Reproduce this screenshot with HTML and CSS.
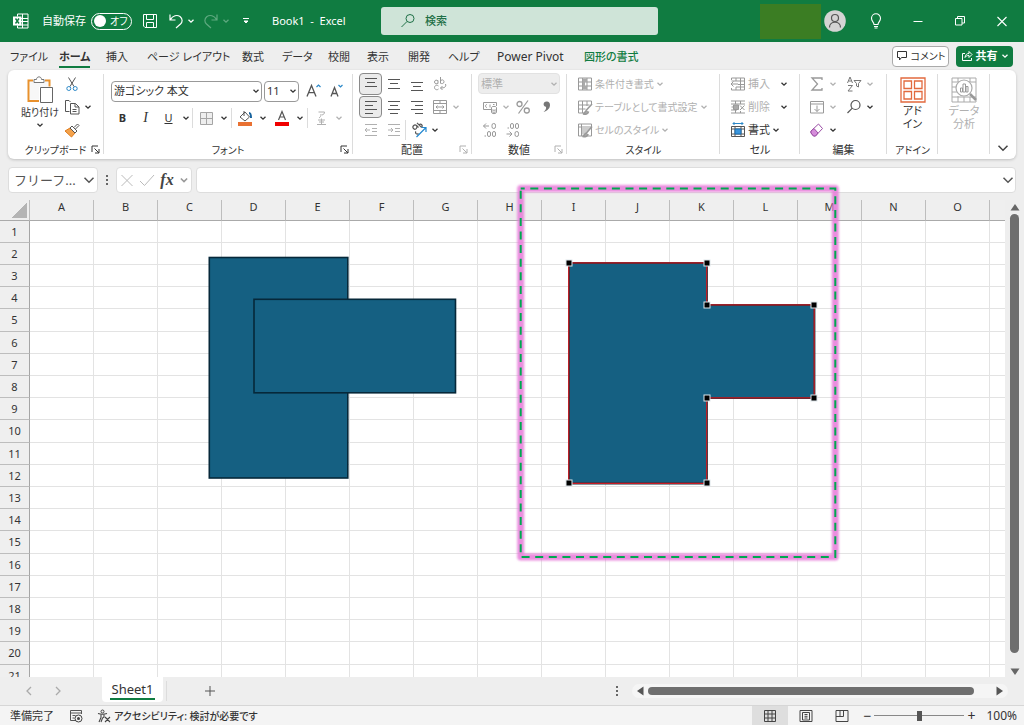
FILE: index.html
```html
<!DOCTYPE html>
<html lang="ja">
<head>
<meta charset="utf-8">
<meta name="viewport" content="width=device-width, initial-scale=1">
<title>Book1 - Excel</title>
<link rel="stylesheet" href="styles.css">
</head>
<body>
<svg class="symbols" aria-hidden="true">
  <symbol id="chev" viewBox="0 0 8 8"><path d="M1.5 2.8 4 5.2 6.5 2.8" fill="none" stroke="currentColor" stroke-width="1.3"/></symbol>
  <symbol id="launch" viewBox="0 0 9 9"><path d="M1 7V1h6M3.5 3.5 8 8M8 4v4H4" fill="none" stroke="currentColor" stroke-width="1"/></symbol>
</svg>

<header class="titlebar">
  <div class="title-left">
    <svg class="i16" viewBox="0 0 16 16"><path d="M4.500 3.500v-2.500h10.500v14h-10.500v-2.500M4.500 5.500h10.500M9.500 1v14M8 8.500h7M4.500 12h10.500" fill="none" stroke="#fff"/><path d="M0 3.500h8.500v9H0z" fill="#fff"/><path d="m2.500 5.500 3.500 5M6 5.500l-3.500 5" stroke="#107c41" stroke-width="1.400"/></svg>
    <label class="autosave" for="autosave">自動保存</label>
    <span class="switch"><input type="checkbox" id="autosave"><span>オフ</span></span>
    <button class="tb save" aria-label="上書き保存"><svg class="i16" viewBox="0 0 16 16"><path d="M1.500 1.500h13v13H3l-1.500-1.500zM4.500 1.500v5h7v-5M4.500 14.500v-5h7v5" fill="none" stroke="#fff"/></svg></button>
    <button class="tb undo" aria-label="元に戻す"><svg class="i16" viewBox="0 0 16 16"><path d="M2 1.500v5.500h5.500M2.200 6.800C5 2.500 9 1.500 12 3.500c3 2.500 2.500 5.500.5 7.500L8 15" fill="none" stroke="#fff" stroke-width="1.200"/></svg><svg class="chev"><use href="#chev"/></svg></button>
    <button class="tb redo" aria-label="やり直し"><svg class="i16" viewBox="0 0 16 16"><path d="M14 1.500v5.500H8.500M13.800 6.800C11 2.500 7 1.500 4 3.500c-3 2.500-2.500 5.500-.5 7.500L8 15" fill="none" stroke="currentColor" stroke-width="1.200"/></svg><svg class="chev"><use href="#chev"/></svg></button>
    <button class="tb more" aria-label="クイック アクセス"><svg class="chev" viewBox="0 0 8 8"><path d="M1 1.500h6M2 4l2 2 2-2z" fill="#fff" stroke="#fff"/></svg></button>
    <span class="doc">Book1&nbsp; -&nbsp; Excel</span>
  </div>
  <label class="search"><svg class="i16" viewBox="0 0 16 16"><circle cx="10" cy="5.500" r="4" fill="none" stroke="#1f7047"/><path d="M7 8.500 1.500 14" stroke="#1f7047"/></svg><input type="text" placeholder="検索" aria-label="検索"></label>
  <div class="title-right">
    <span class="mask"></span>
    <button class="avatar" aria-label="アカウント"><svg viewBox="0 0 22 22"><circle cx="11" cy="11" r="10.800" fill="#d4d4d4"/><circle cx="11" cy="8" r="3.500" fill="none" stroke="#555" stroke-width="1.200"/><path d="M5.500 17.500c0-7 11-7 11 0" fill="none" stroke="#555" stroke-width="1.200"/></svg></button>
    <button class="win" aria-label="ヒント"><svg class="i16" viewBox="0 0 16 16"><path d="M6 11.500C6 9 3.500 8.500 3.500 5.300a4.500 4.500 0 0 1 9 0C12.500 8.500 10 9 10 11.500zM6 13.500h4M6.500 15h3" fill="none" stroke="#fff" stroke-width="1.100"/></svg></button>
    <button class="win" aria-label="最小化"><svg class="i16" viewBox="0 0 16 16"><path d="M3.500 8.500h9" stroke="#fff"/></svg></button>
    <button class="win" aria-label="元に戻す"><svg class="i16" viewBox="0 0 16 16"><path d="M3.500 5.500h6.500v6.500H3.500zM5.500 5.500v-2h7v6.500h-2.500" fill="none" stroke="#fff"/></svg></button>
    <button class="win" aria-label="閉じる"><svg class="i16" viewBox="0 0 16 16"><path d="m3.500 4 9 9M12.500 4l-9 9" stroke="#fff" stroke-width="1.100"/></svg></button>
  </div>
</header>

<div class="tabrow">
  <nav class="tabs">
    <a href="#">ファイル</a><a href="#" class="active">ホーム</a><a href="#">挿入</a><a href="#">ページ レイアウト</a><a href="#">数式</a><a href="#">データ</a><a href="#">校閲</a><a href="#">表示</a><a href="#">開発</a><a href="#">ヘルプ</a><a href="#" class="latin">Power Pivot</a><a href="#" class="context">図形の書式</a>
  </nav>
  <button class="comment kana"><svg viewBox="0 0 12 12"><path d="M1.500 1.500h9v6H5.500L3.500 10V7.500h-2z" fill="none" stroke="#333"/></svg>コメント</button>
  <button class="share"><svg viewBox="0 0 12 12"><path d="M4 3.500H1.500v7h9V8M4 7.500c.3-3 2-4 4-4V1.500l3 3-3 3v-2c-2 0-3 .5-4 2z" fill="none" stroke="#fff"/></svg>共有<svg class="chev"><use href="#chev"/></svg></button>
</div>

<section class="ribbon">
  <div class="group">
    <div class="clip">
      <button class="big kana"><svg class="i28" viewBox="0 0 28 28"><path d="M7 4.500H2.500v20.500H13M19 4.500h4.500v6" fill="none" stroke="#e8912d" stroke-width="2"/><path d="M4 6v17.500h9V11h9V6z" fill="#f7f7f7"/><path d="M8 6.500V3.500h2.500c0-3.500 5-3.500 5 0H18v3z" fill="#fff" stroke="#777"/><path d="M14.500 11.500h12v15h-12z" fill="#fff" stroke="#666"/></svg>貼り付け<svg class="chev"><use href="#chev"/></svg></button>
      <div class="stack">
        <button class="cb" aria-label="切り取り"><svg class="i16" viewBox="0 0 16 16"><path d="m4.500 1.500 5.500 9M11.500 1.500 6 10.500" stroke="#555"/><circle cx="4.800" cy="12.500" r="2" fill="none" stroke="#2b88c8"/><circle cx="11.200" cy="12.500" r="2" fill="none" stroke="#2b88c8"/></svg></button>
        <button class="cb" aria-label="コピー"><svg class="i16" viewBox="0 0 16 16"><path d="M5.500 12.500h-4v-11H5l1.500 1.500M6.500 4.500h5l3.500 3.500v7H6.500zM11 4.500V8h4M8.500 10.500h4M8.500 12.500h4" fill="none" stroke="#555"/></svg><svg class="chev"><use href="#chev"/></svg></button>
        <button class="cb" aria-label="書式のコピー"><svg class="i16" viewBox="0 0 16 16"><path d="m1 9 5-3 5 5-3.500 4z" fill="#f3a24c" stroke="#df7b1c"/><path d="m6 6 2-2 5 5-2 2zM10 5.500 13.500 2 15 3.500 11.500 7" fill="#fff" stroke="#555"/></svg></button>
      </div>
    </div>
    <div class="foot"><span class="kana">クリップボード</span><button aria-label="詳細"><svg><use href="#launch"/></svg></button></div>
  </div>

  <div class="group">
    <div class="font">
      <div class="row fontpick">
        <span class="combo face"><select aria-label="フォント"><option>游ゴシック 本文</option></select><svg class="chev"><use href="#chev"/></svg></span>
        <span class="combo size"><select aria-label="フォント サイズ"><option>11</option></select><svg class="chev"><use href="#chev"/></svg></span>
        <button class="ib" aria-label="拡大"><svg class="i16" viewBox="0 0 16 16"><path d="m1 13.500 4.500-11 4.500 11M2.600 9.700h5.800" fill="none" stroke="#555" stroke-width="1.300"/><path d="m10.500 4 2-2 2 2" fill="none" stroke="#2b88c8" stroke-width="1.200"/></svg></button>
        <button class="ib" aria-label="縮小"><svg class="i16" viewBox="0 0 16 16"><path d="m2 13.500 3.500-9 3.500 9M3.300 10.500h4.400" fill="none" stroke="#555" stroke-width="1.300"/><path d="m9.500 2 2 2 2-2" fill="none" stroke="#2b88c8" stroke-width="1.200"/></svg></button>
      </div>
      <div class="row fontstyle">
        <button class="ib bold">B</button><button class="ib ital">I</button><button class="ib under">U</button><button class="arr" aria-label="下線"><svg class="chev"><use href="#chev"/></svg></button>
        <i class="sep"></i>
        <button class="ib" aria-label="罫線"><svg class="i16" viewBox="0 0 16 16"><path d="M2.500 2.500h12v12h-12zM8.500 2.500v12M2.500 8.500h12" fill="#eee" stroke="#a5a5a5"/></svg></button><button class="arr" aria-label="罫線の種類"><svg class="chev"><use href="#chev"/></svg></button>
        <i class="sep"></i>
        <button class="ib" aria-label="塗りつぶし"><svg class="i16" viewBox="0 0 16 16"><path d="m3 7 5-5 4.500 5L8 11zM7 1v5" fill="none" stroke="#555"/><path d="M12 3c1 0 2 1.500 2 5" fill="none" stroke="#17639e" stroke-width="2"/><path d="M1 12h14v4H1z" fill="#e97132"/></svg></button><button class="arr" aria-label="塗りつぶしの色"><svg class="chev"><use href="#chev"/></svg></button>
        <button class="ib" aria-label="文字の色"><svg class="i16" viewBox="0 0 16 16"><path d="M4.500 10 8 1.500l3.500 8.500M5.700 7h4.600" fill="none" stroke="#555" stroke-width="1.200"/><path d="M1 12h14v4H1z" fill="#f00000"/></svg></button><button class="arr" aria-label="色の選択"><svg class="chev"><use href="#chev"/></svg></button>
        <i class="sep"></i>
        <button class="ib off" aria-label="ふりがな"><svg class="i16" viewBox="0 0 16 16"><path d="M5.500 2h6c0 2-1 2.500-2.500 3M8 4c0 2-.5 3-2 4M5 10h7M4 14.500h9M6 12h5M8.500 8.500v6" fill="none" stroke="currentColor"/></svg></button><button class="arr off" aria-label="ふりがなの設定"><svg class="chev"><use href="#chev"/></svg></button>
      </div>
    </div>
    <div class="foot"><span class="kana">フォント</span><button aria-label="詳細"><svg><use href="#launch"/></svg></button></div>
  </div>

  <div class="group">
    <div class="aligns">
      <div class="row">
        <button class="ib on" aria-label="上揃え"><svg class="i16" viewBox="0 0 16 16"><path d="M2 2.500h12M4 6.500h8M2 10.500h12" stroke="#555"/></svg></button>
        <button class="ib" aria-label="上下中央"><svg class="i16" viewBox="0 0 16 16"><path d="M2 3.500h12M4 7.500h8M2 12.500h12" stroke="#555"/></svg></button>
        <button class="ib" aria-label="下揃え"><svg class="i16" viewBox="0 0 16 16"><path d="M2 6.500h12M4 10.500h8M2 14.500h12" stroke="#555"/></svg></button>
        <button class="ib off" aria-label="折り返し"><svg class="i16" viewBox="0 0 16 16"><path d="M6 4.500v3M6 5c-1-1.500-3.500-1-3.500 1s2.500 2.500 3.500 1M8.500 1v6.500M8.500 5C10 3 12 4 12 5.800s-2.500 2.500-3.500 1M6.500 10C5 8.500 2.500 9.500 2.500 11.500s2.500 3 4 1.500M13.500 8c1 3-1 4-5 4M10.500 10l-2 2 2 2" fill="none" stroke="#999"/></svg></button>
      </div>
      <div class="row">
        <button class="ib on" aria-label="左揃え"><svg class="i16" viewBox="0 0 16 16"><path d="M2 2.500h12M2 6.500h8M2 10.500h12M2 14.500h8" stroke="#555"/></svg></button>
        <button class="ib" aria-label="中央揃え"><svg class="i16" viewBox="0 0 16 16"><path d="M2 2.500h12M4 6.500h8M2 10.500h12M4 14.500h8" stroke="#555"/></svg></button>
        <button class="ib" aria-label="右揃え"><svg class="i16" viewBox="0 0 16 16"><path d="M2 2.500h12M6 6.500h8M2 10.500h12M6 14.500h8" stroke="#555"/></svg></button>
        <button class="ib off" aria-label="結合"><svg class="i16" viewBox="0 0 16 16"><path d="M1.500 1.500h13v13h-13zM1.500 4.500h13M1.500 11.500h13M8 1.500v3M8 11.500v3M4 8h8M5.500 6.500 4 8l1.500 1.500M10.500 6.500 12 8l-1.500 1.500" fill="none" stroke="#999"/></svg></button><button class="arr off" aria-label="結合の種類"><svg class="chev"><use href="#chev"/></svg></button>
      </div>
      <div class="row">
        <button class="ib off" aria-label="インデント減"><svg class="i16" viewBox="0 0 16 16"><path d="M2 2.500h12M9 6.500h5M9 9.500h5M2 13.500h12M2 8h5M4 6 2 8l2 2" fill="none" stroke="currentColor"/></svg></button>
        <button class="ib off" aria-label="インデント増"><svg class="i16" viewBox="0 0 16 16"><path d="M2 2.500h12M9 6.500h5M9 9.500h5M2 13.500h12M2 8h5M5 6l2 2-2 2" fill="none" stroke="currentColor"/></svg></button>
        <i class="sep"></i>
        <button class="ib" aria-label="方向"><svg class="i16" viewBox="0 0 16 16"><path d="M5.500 3.500C3.500 2 .500 4.500 2.500 6.500s4.500-.5 3-3l2 2M6 .8l4.500 4.500M8 3c2-2 4.500.5 2.500 2.500M5 9.500c-1.500 1.500 1 3.500 2.500 2" fill="none" stroke="#555" stroke-width="1.200"/><path d="m5.500 15 9-9M10.500 5.500h4.500v4.500" fill="none" stroke="#2488d0" stroke-width="1.200"/></svg></button><button class="arr" aria-label="方向の種類"><svg class="chev"><use href="#chev"/></svg></button>
      </div>
    </div>
    <div class="foot"><span>配置</span><button class="off" aria-label="詳細"><svg><use href="#launch"/></svg></button></div>
  </div>

  <div class="group">
    <div class="number">
      <div class="row"><span class="combo numfmt off"><select aria-label="表示形式" disabled><option>標準</option></select><svg class="chev"><use href="#chev"/></svg></span></div>
      <div class="row off">
        <button class="ib" aria-label="通貨"><svg class="i16" viewBox="0 0 16 16"><path d="M9 10.500H1.500v-7h13V7M5 5.500c-2 0-2 3 0 3M8 5.500v3M11 5.500h1.500M9.500 8.500c0-1.500 5-1.500 5 0v5c0 1.500-5 1.500-5 0zM9.500 10.500c1 1 4 1 5 0M9.500 12.500c1 1 4 1 5 0" fill="none" stroke="#999"/></svg></button><button class="arr" aria-label="通貨の種類"><svg class="chev"><use href="#chev"/></svg></button>
        <button class="ib" aria-label="パーセント"><svg class="i16" viewBox="0 0 16 16"><circle cx="4.500" cy="5" r="2.500" fill="none" stroke="#999" stroke-width="1.300"/><circle cx="11.800" cy="11.500" r="2.500" fill="none" stroke="#999" stroke-width="1.300"/><path d="m3.500 14.500 9.500-13" stroke="#999" stroke-width="1.200"/></svg></button>
        <button class="ib" aria-label="桁区切り"><svg class="i16" viewBox="0 0 16 16"><path d="M9 2.500c-4-.5-4.500 5-1 5.200.5 2-.5 3.800-2.500 5.300 4.500-1.500 6.500-4 6.500-7C12 3.800 10.800 2.500 9 2.500z" fill="#777"/></svg></button>
      </div>
      <div class="row off">
        <button class="ib" aria-label="小数点増"><svg class="i16" viewBox="0 0 16 16"><path d="M7 4H1.500M4 1.500 1.500 4 4 6.500" fill="none" stroke="#999"/><rect x="10" y="1.500" width="3.500" height="5" rx="1.700" fill="none" stroke="#999"/><rect x="5.500" y="9.500" width="3" height="5" rx="1.500" fill="none" stroke="#999"/><rect x="10.500" y="9.500" width="3" height="5" rx="1.500" fill="none" stroke="#999"/><path d="M2.500 14h1.500" stroke="#999"/></svg></button>
        <button class="ib" aria-label="小数点減"><svg class="i16" viewBox="0 0 16 16"><path d="M1.500 12H7M4.500 9.500 7 12l-2.500 2.500M2.500 6h1.500" fill="none" stroke="#999"/><rect x="5.500" y="1.500" width="3" height="5" rx="1.500" fill="none" stroke="#999"/><rect x="10.500" y="1.500" width="3" height="5" rx="1.500" fill="none" stroke="#999"/><rect x="10" y="9.500" width="3.500" height="5" rx="1.700" fill="none" stroke="#999"/></svg></button>
      </div>
    </div>
    <div class="foot"><span>数値</span><button class="off" aria-label="詳細"><svg><use href="#launch"/></svg></button></div>
  </div>

  <div class="group">
    <div class="styles off kana">
      <button class="line"><svg class="i16" viewBox="0 0 16 16"><path d="M1.500 2h13v12h-13zM1.500 6h13M1.500 10h13M5.500 2v12M10 2v12" fill="none" stroke="#999"/><path d="M5.500 2.500h4.500v3.500h-2v4h2v3.500h-4.500z" fill="#aaa"/></svg>条件付き書式<svg class="chev"><use href="#chev"/></svg></button>
      <button class="line"><svg class="i16" viewBox="0 0 16 16"><path d="M10 14H1.500V2h13v4M1.500 6h11M1.500 10h7M5.500 2v12M10 2v5" fill="none" stroke="#999"/><path d="m15 5-6 6.500M10 11.500c-2 0-2 3-4 3.500 3 .5 5.500-.5 5.500-2.500" fill="#aaa" stroke="#999" stroke-width="1.600"/></svg>テーブルとして書式設定<svg class="chev"><use href="#chev"/></svg></button>
      <button class="line"><svg class="i16" viewBox="0 0 16 16"><path d="M1.500 2h13v12h-13zM1.500 5h13M4.500 2v12" fill="none" stroke="#999"/><path d="M5 5.500h9l-7 7H5z" fill="#ccc"/><path d="m15 4.500-6 7M9.500 11c-2 0-2 3-4 3.500 3 .5 5.500-.5 5.500-2.500" fill="#aaa" stroke="#999" stroke-width="1.600"/></svg>セルのスタイル<svg class="chev"><use href="#chev"/></svg></button>
    </div>
    <div class="foot plain"><span class="kana">スタイル</span></div>
  </div>

  <div class="group">
    <div class="cells">
      <button class="line"><svg class="i16 off" viewBox="0 0 16 16"><path d="M1.500 4V2h13v12h-13v-2M6 2v3M10.500 2v12M6 11v3M1.500 5h13M8 8.500h6.500M6 11h8.500M8 8h-7M3.500 5.500 1 8l2.500 2.500" fill="none" stroke="#999"/></svg><span class="off">挿入</span><svg class="chev far"><use href="#chev"/></svg></button>
      <button class="line"><svg class="i16 off" viewBox="0 0 16 16"><path d="M1 2h14M1 5h14M1 14h14M1 11h6M5.500 2v3M10.500 2v3M5.500 11v3M10.500 12v2M1.500 8h3M10 6.500l4.500 4.500M14.500 6.500 10 11" fill="none" stroke="#999"/><path d="M3.500 6h5v4.500h-5z" fill="#aaa" stroke="#999"/></svg><span class="off">削除</span><svg class="chev far"><use href="#chev"/></svg></button>
      <button class="line"><svg class="i16" viewBox="0 0 16 16"><path d="M1.500 4.500h13v10h-13zM1.500 7h13M1.500 12h13M5 4.500v10M11 4.500v10" fill="none" stroke="#555"/><path d="M5 7h6v5H5z" fill="#3a96dd" stroke="#1d6fb0"/><path d="M3 1.500h10M4.500 0 3 1.500 4.500 3M11.500 0 13 1.500 11.500 3" fill="none" stroke="#2b88c8"/></svg><span>書式</span><svg class="chev"><use href="#chev"/></svg></button>
    </div>
    <div class="foot plain"><span>セル</span></div>
  </div>

  <div class="group">
    <div class="edit">
      <button class="cb off" aria-label="合計"><svg class="i16" viewBox="0 0 16 16"><path d="M13 4V2H3l5.500 6L3 14h10v-2" fill="none" stroke="#999" stroke-width="1.300"/></svg><svg class="chev"><use href="#chev"/></svg></button>
      <button class="cb off" aria-label="並べ替え"><svg class="i16" viewBox="0 0 16 16"><path d="m1.500 7 2.500-6 2.500 6M2.500 5h3M2 9.500h4.500L2 15h4.500" fill="none" stroke="#777"/><path d="M8 4.500h7l-2.500 3V11l-2-1V7.500z" fill="none" stroke="#777"/></svg><svg class="chev"><use href="#chev"/></svg></button>
      <button class="cb off" aria-label="フィル"><svg class="i16" viewBox="0 0 16 16"><path d="M1.500 2.500h13v11.500h-13zM1.500 5h13M8 6.500v6M5.500 10 8 12.500 10.500 10" fill="none" stroke="#999"/></svg><svg class="chev"><use href="#chev"/></svg></button>
      <button class="cb" aria-label="検索と選択"><svg class="i16" viewBox="0 0 16 16"><circle cx="9.500" cy="6" r="4.500" fill="none" stroke="#555" stroke-width="1.200"/><path d="M6.300 9.200 1.500 14" stroke="#555" stroke-width="1.200"/></svg><svg class="chev"><use href="#chev"/></svg></button>
      <button class="cb" aria-label="クリア"><svg class="i16" viewBox="0 0 16 16"><path d="m2 9 7.500-7 4 4.500L6.500 14H4.500L2 11z" fill="#fff" stroke="#9b4fa5"/><path d="m2 9 3-2.500L9 11l-2.500 3H4.500L2 11z" fill="#d68ddb" stroke="#9b4fa5"/></svg><svg class="chev"><use href="#chev"/></svg></button>
    </div>
    <div class="foot plain"><span>編集</span></div>
  </div>

  <div class="group">
    <button class="big"><svg class="i28" viewBox="0 0 28 28"><path d="M2 2h24v24H2zM5 5h7.500v7.500H5zM15.500 5H23v7.500h-7.500zM5 15.500h7.500V23H5zM15.500 15.500H23V23h-7.500z" fill="none" stroke="#e2693e" stroke-width="1.300"/></svg>アド<br>イン</button>
    <div class="foot plain"><span class="kana">アドイン</span></div>
  </div>

  <div class="group">
    <button class="big off"><svg class="i28" viewBox="0 0 28 28"><path d="M2 2h24v24H2zM2 6h24M2 11h5M2 16h5M2 21h24M8 2v4M8 20v6M14 21v5M20 2v4M20 21v5" fill="none" stroke="#aaa"/><circle cx="14" cy="12" r="8" fill="#fff" stroke="#aaa" stroke-width="1.200"/><path d="M10.500 12h2v4h-2zM13 8h2.500v8H13zM16 10.500h2V16h-2z" fill="none" stroke="#999"/><path d="m20 18 6 6" stroke="#999" stroke-width="2.500"/></svg>データ<br>分析</button>
    <div class="foot plain"></div>
  </div>
  <button class="collapse" aria-label="リボンを折りたたむ"><svg class="i12" viewBox="0 0 8 8"><path d="M1 2.500 4 5.500 7 2.500" fill="none" stroke="#444"/></svg></button>
</section>

<section class="formula">
  <div class="namebox"><input type="text" value="フリーフ..." aria-label="名前ボックス"><svg class="i12" viewBox="0 0 8 8"><path d="M1 2.500 4 5.500 7 2.500" fill="none" stroke="#555"/></svg></div>
  <svg class="grip" viewBox="0 0 4 12"><path d="M1 1h2v2H1zM1 5h2v2H1zM1 9h2v2H1z" fill="#666"/></svg>
  <div class="fxbox">
    <button aria-label="キャンセル"><svg class="i16" viewBox="0 0 16 16"><path d="m2.500 3 11 11M13.500 3l-11 11" stroke="#bbb"/></svg></button>
    <button aria-label="入力"><svg class="i16" viewBox="0 0 16 16"><path d="m1 9 4.500 4.500L15 3" fill="none" stroke="#bbb"/></svg></button>
    <button class="fx">fx</button><svg class="chev"><use href="#chev"/></svg>
  </div>
  <div class="fbar"><input type="text" aria-label="数式バー"><svg class="i12" viewBox="0 0 8 8"><path d="M1 2.500 4 5.500 7 2.500" fill="none" stroke="#555"/></svg></div>
</section>

<main class="sheet">
  <div class="viewport"><table id="grid"></table></div>
  <svg class="shapes" viewBox="0 200 1024 477" width="1024" height="477" aria-hidden="true">
    <defs><filter id="glow" filterUnits="userSpaceOnUse" x="500" y="170" width="360" height="410"><feGaussianBlur stdDeviation="1.300"/></filter></defs>
    <g fill="#156082" stroke="#06283a" stroke-width="1.600">
      <rect x="209.300" y="257.500" width="138.500" height="220.500"/>
      <rect x="254" y="299.300" width="201.500" height="93.500"/>
    </g>
    <path d="M569 263h138v42h107.500v93H707v85.500H569z" fill="#156082" stroke="#17313f" stroke-width="1.800"/>
    <path d="M568.700 262.800h138v42h107.500v93H706.700v85.500H568.700z" fill="none" stroke="#c91c24" stroke-width="1.200"/>
    <g id="handles" fill="#000" stroke="#dde5ea">
      <rect x="566" y="260" width="6" height="6"/><rect x="704" y="260" width="6" height="6"/><rect x="704" y="302" width="6" height="6"/><rect x="811" y="302" width="6" height="6"/><rect x="811" y="395" width="6" height="6"/><rect x="704" y="395" width="6" height="6"/><rect x="704" y="480" width="6" height="6"/><rect x="566" y="480" width="6" height="6"/>
    </g>
    <rect x="520.700" y="188.500" width="314.600" height="368.500" fill="none" stroke="#e679d8" stroke-opacity=".85" stroke-width="7" stroke-linejoin="round" filter="url(#glow)"/>
    <path d="M520.700 188.500h314.600V557H520.700z" fill="none" stroke="#00a850" stroke-width="2" stroke-dasharray="8 5.600" stroke-dashoffset="4"/>
  </svg>
  <div class="vscroll">
    <svg viewBox="0 0 10 8"><path d="M5 1 9.500 7.500h-9z" fill="#666"/></svg><span class="thumb"></span><svg class="down" viewBox="0 0 10 8"><path d="M5 7 .5.500h9z" fill="#666"/></svg>
  </div>
</main>

<div class="sheetbar">
  <button class="nav" aria-label="前"><svg class="i12" viewBox="0 0 12 12"><path d="M8 2 4 6l4 4" fill="none" stroke="#aaa" stroke-width="1.300"/></svg></button>
  <button class="nav" aria-label="次"><svg class="i12" viewBox="0 0 12 12"><path d="m4 2 4 4-4 4" fill="none" stroke="#aaa" stroke-width="1.300"/></svg></button>
  <button class="sheettab"><span>Sheet1</span></button>
  <i class="sep"></i>
  <button class="add" aria-label="新しいシート"><svg class="i12" viewBox="0 0 12 12"><path d="M6 1v10M1 6h10" stroke="#555"/></svg></button>
  <svg class="grip" viewBox="0 0 4 12"><path d="M1 1h2v2H1zM1 5h2v2H1zM1 9h2v2H1z" fill="#666"/></svg>
  <div class="hscroll"><svg viewBox="0 0 8 10"><path d="M1 5 7.500.500v9z" fill="#555"/></svg><span class="thumb"></span><svg viewBox="0 0 8 10"><path d="M7 5 .5.500v9z" fill="#555"/></svg></div>
</div>

<footer class="status">
  <span class="ready">準備完了</span>
  <svg class="i14" viewBox="0 0 14 14"><path d="M7 11.500H1.500v-10h11V5M1.500 4h11M3.500 6.500h3M3.500 9h2" fill="none" stroke="#555"/><circle cx="9.500" cy="9.500" r="3.500" fill="none" stroke="#444"/><circle cx="9.500" cy="9.500" r="1.500" fill="#444"/></svg>
  <button class="a11y kana"><svg class="i14" viewBox="0 0 14 14"><circle cx="5.500" cy="2.500" r="1.500" fill="none" stroke="#444"/><path d="M1 4.500c3 1 6 1 9 0M4 5.500v3L2 13M7 5.500v2.500L5.500 9 4 13M8 8l5 5M13 8l-5 5" fill="none" stroke="#444" stroke-width="1.100"/></svg>アクセシビリティ: 検討が必要です</button>
  <span class="spacer"></span>
  <button class="view on" aria-label="標準"><svg class="i14" viewBox="0 0 14 14"><path d="M1.500 1.500h11v11h-11zM1.500 5h11M1.500 9h11M5 1.500v11M9 1.500v11" fill="none" stroke="#444"/></svg></button>
  <button class="view" aria-label="ページ レイアウト"><svg class="i14" viewBox="0 0 14 14"><path d="M1 1.500h12v11H1zM3.500 3.500h7v7.500h-7zM5.500 5.500h3M5.500 7.300h3M5.500 9h3" fill="none" stroke="#444"/></svg></button>
  <button class="view" aria-label="改ページ"><svg class="i14" viewBox="0 0 14 14"><path d="M1 1.500h12v11H1zM1 7.500h7.500v-6M5 1.500v6" fill="none" stroke="#444"/></svg></button>
  <button class="zb">−</button><input type="range" min="0" max="100" value="50" aria-label="ズーム"><button class="zb">+</button>
  <span class="percent">100%</span>
</footer>
<script src="sheet.js"></script>
</body>
</html>
```

FILE: sheet.js
```js
const grid = document.getElementById('grid');
// The last column is only partly in view and carries no heading.
const headings = [...'ABCDEFGHIJKLMNO', ''];
const head = grid.createTHead().insertRow();
const corner = document.createElement('th');
corner.className = 'corner';
head.append(corner);
for (const letter of headings) {
  const th = document.createElement('th');
  th.scope = 'col';
  th.textContent = letter;
  head.append(th);
}
const body = grid.createTBody();
for (let n = 1; n <= 21; n++) {
  const row = body.insertRow();
  const th = document.createElement('th');
  th.scope = 'row';
  th.textContent = n;
  row.append(th);
  headings.forEach(() => row.insertCell());
}
```

FILE: styles.css
```css
* { box-sizing: border-box; }
body {
  margin: 0;
  height: 100vh;
  display: flex;
  flex-direction: column;
  overflow: hidden;
  background: #eee;
  color: #333;
  font: 11px/14px "Noto Sans", "Noto Sans CJK JP", sans-serif;
  font-feature-settings: "palt";
}
button, input, select {
  font: inherit;
  font-feature-settings: inherit;
  color: inherit;
  background: none;
  border: 0;
  padding: 0;
  margin: 0;
  min-width: 0;
}
button { display: flex; align-items: center; justify-content: center; white-space: nowrap; }
input { outline: 0; }
a { color: inherit; text-decoration: none; }
svg { display: block; flex: none; }
.symbols { width: 0; height: 0; position: absolute; }
.i16 { width: 16px; height: 16px; }
.i14 { width: 14px; height: 14px; }
.i12 { width: 12px; height: 12px; }
.i28 { width: 28px; height: 28px; }
.chev { width: 8px; height: 8px; }
.off { color: #b0b0b0; }
.kana { font-size: 10px; }

/* title bar */
.titlebar {
  flex: none;
  height: 42px;
  background: #107c41;
  color: #fff;
  display: grid;
  grid-template-columns: 381fr 277fr 366fr;
  align-items: center;
}
.title-left { display: flex; align-items: center; padding-left: 13px; white-space: nowrap; min-width: 0; }
.autosave { margin: 0 5px 0 13px; }
.switch {
  display: flex;
  align-items: center;
  gap: 4px;
  width: 41px;
  height: 17px;
  padding-left: 2px;
  border: 1px solid #fff;
  border-radius: 9px;
  font-size: 10px;
}
.switch input { flex: none; appearance: none; width: 12px; height: 12px; border-radius: 50%; background: #fff; }
.tb { gap: 3px; }
.save { margin-left: 10px; }
.undo { margin-left: 10px; }
.redo { margin-left: 8px; color: #5fa980; }
.more { margin-left: 12px; }
.doc { margin-left: 22px; }
.search {
  height: 28px;
  display: flex;
  align-items: center;
  gap: 9px;
  padding-left: 19px;
  border-radius: 3px;
  background: #cfe4d8;
}
.search input { flex: 1; }
.search input::placeholder { color: #1f7047; opacity: 1; font-weight: 500; }
.title-right { display: flex; align-items: center; justify-content: flex-end; padding-right: 1px; }
.mask { width: 61px; height: 35px; background: #3b7d23; margin-right: 3px; }
.avatar { width: 22px; height: 22px; margin-right: 9px; }
.avatar svg { width: 22px; height: 22px; }
.win { width: 42px; height: 42px; }

/* tab row */
.tabrow { flex: none; height: 28px; display: flex; align-items: center; padding: 0 11px 0 10px; }
.tabs {
  flex: 1;
  display: grid;
  grid-template-columns: 49px 47px 41px 95px 40px 46px 39px 41px 40px 49px 87px 1fr;
  justify-items: start;
  white-space: nowrap;
}
.tabs a { padding: 5px 0 2px; border-bottom: 2px solid transparent; }
.tabs .active { font-weight: 700; border-color: #107c41; }
.tabs .context { color: #107c41; font-weight: 500; }
.tabs .latin { font-size: 12px; }
.comment, .share { height: 21px; width: 57px; gap: 3px; border-radius: 4px; }
.comment svg, .share svg:first-child { width: 12px; height: 12px; }
.comment { background: #fff; border: 1px solid #aaa; }
.share { background: #107c41; color: #fff; margin-left: 7px; font-weight: 700; }

/* ribbon */
.ribbon {
  flex: none;
  margin: 0 8px;
  height: 89px;
  padding: 2px 0 1px;
  display: grid;
  grid-template-columns: 96fr 249fr 119fr 95fr 153fr 80fr 87fr 51fr 52fr 26fr;
  background: #fff;
  border-radius: 6px;
  box-shadow: 0 1px 3px rgba(0, 0, 0, .2);
}
.group { min-width: 0; display: grid; grid-template-columns: minmax(0, 1fr); grid-template-rows: 69px 17px; position: relative; }
.group::after { content: ""; position: absolute; right: 0; top: 2px; bottom: 4px; width: 1px; background: #dcdcdc; }
.foot { display: grid; grid-template-columns: 12px 1fr 13px; align-items: center; justify-items: start; white-space: nowrap; }
.foot span { grid-column: 2; justify-self: center; }
.foot.plain { display: flex; justify-content: center; }
.foot svg { width: 9px; height: 9px; }
.row { display: flex; align-items: center; height: 23px; }
.sep { width: 1px; height: 20px; background: #dcdcdc; }
.ib { width: 23px; height: 22px; flex: none; }
.arr { width: 10px; height: 22px; flex: none; }
.cb { gap: 4px; height: 23px; }
.big { flex-direction: column; justify-content: flex-start; padding-top: 4px; line-height: 13px; width: 100%; text-align: center; }
.on { background: #ebebeb; border: 1px solid #8a8a8a; border-radius: 4px; }

.clip { display: grid; grid-template-columns: 44px 36px; padding-left: 10px; }
.clip .big { gap: 2px; }
.stack { display: grid; grid-template-rows: repeat(3, 23px); justify-items: start; padding-left: 2px; }

.font { display: grid; grid-template-rows: 22px 22px; gap: 5px; padding: 8px 0 0 7px; }
.font .row { height: 22px; }
.combo { display: grid; align-items: center; height: 21px; border: 1px solid #999; border-radius: 4px; }
.combo select, .combo .chev { grid-area: 1 / 1; }
.combo select { appearance: none; width: 100%; height: 19px; padding-left: 2px; opacity: 1; color: inherit; }
.combo .chev { justify-self: end; margin-right: 1px; pointer-events: none; }
.face { width: 151px; margin-right: 2px; }
.size { width: 35px; margin-right: 3px; }
.bold { font-weight: 700; }
.ital { font-family: "Liberation Serif", serif; font-style: italic; font-size: 14px; }
.under { text-decoration: underline; }
.fontstyle .arr { margin: 0 2px; }
.fontstyle .under + .arr { margin: 0 1px; }
.fontstyle .sep { margin-right: 1px; }

.aligns { padding-left: 6px; }
.aligns .sep { margin-right: 1px; }
.number { padding-left: 6px; }
.numfmt { width: 82px; background: #ededed; border-color: #e2e2e2; }
.styles, .cells { display: grid; grid-template-rows: repeat(3, 23px); justify-items: start; padding-left: 10px; }
.line { gap: 2px; }
.far { margin-left: 8px; }
.edit { display: grid; grid-template-columns: 37px 30px; grid-template-rows: repeat(3, 23px); justify-items: start; padding-left: 9px; }
.edit .cb { gap: 4px; }
.collapse { align-self: end; height: 20px; }

/* formula row */
.formula { flex: none; height: 41px; padding: 8px 8px 7px; display: flex; align-items: stretch; }
.namebox, .fxbox, .fbar { background: #fff; border: 1px solid #ddd; border-radius: 4px; display: flex; align-items: center; }
.namebox { width: 90px; padding: 0 2px 0 5px; font-size: 13px; color: #555; font-feature-settings: normal; }
.namebox input, .fbar input { flex: 1; }
.grip { width: 4px; height: 12px; align-self: center; margin: 0 7px; }
.fxbox { width: 76px; padding: 0 1px 0 2px; gap: 4px; margin-right: 4px; color: #999; }
.fxbox .chev { width: 10px; height: 10px; }
.fx { font: italic 700 16px/18px "Liberation Serif", serif; color: #444; width: 16px; }
.fbar { flex: 1; padding-right: 1px; }

/* worksheet */
.sheet { flex: 1; min-height: 0; position: relative; display: flex; }
.viewport { flex: 1; min-width: 0; overflow: hidden; }
#grid { table-layout: fixed; width: 1054px; border-collapse: separate; border-spacing: 0; }
#grid th, #grid td { padding: 0; height: 22px; line-height: 20px; }
#grid th { font-weight: 400; background: #efefef; }
#grid thead th { width: 64px; height: 21px; line-height: 13px; padding-bottom: 7px; border-right: 1px solid #bdbdbd; border-bottom: 1px solid #aaa; }
#grid thead .corner { width: 30px; background: linear-gradient(135deg, transparent 50%, #b4b4b4 50%) 12px 3px / 15px 15px no-repeat #efefef; }
#grid tbody th { border-right: 1px solid #a5a5a5; border-bottom: 1px solid #bdbdbd; }
#grid td { background: #fff; border-right: 1px solid #e3e3e3; border-bottom: 1px solid #e3e3e3; }
#grid tbody tr:nth-child(5n) > * { height: 23px; }
/* drawing layer: shapes are placed freely over the cells */
.shapes { position: absolute; left: 0; top: 0; overflow: visible; pointer-events: none; }
.vscroll { width: 19px; padding: 3px 0 1px; display: flex; flex-direction: column; align-items: center; }
.vscroll svg { width: 10px; height: 8px; }
.vscroll .thumb { flex: 1; width: 9px; margin: 3px 0 15px; border-radius: 5px; background: #6e6e6e; }

/* sheet tabs */
.sheetbar { flex: none; height: 28px; padding: 0 16px 0 14px; display: flex; align-items: center; }
.nav { width: 29px; }
.sheettab { width: 61px; height: 25px; margin: 0 3px 3px 30px; background: #fff; border-radius: 0 0 4px 4px; font-size: 13px; line-height: 17px; }
.sheettab span { border-bottom: 2px solid #107c41; padding: 1px 2px 0; }
.add { margin-left: 37px; }
.sheetbar .grip { margin: 0 13px 0 auto; }
.hscroll { width: 376px; height: 14px; padding: 0 4px; display: flex; align-items: center; background: #f5f5f5; border-radius: 7px; }
.hscroll svg { width: 8px; height: 10px; }
.hscroll .thumb { flex: 1; height: 8px; margin: 0 22px 0 4px; border-radius: 4px; background: #6e6e6e; }

/* status bar */
.status { flex: none; height: 20px; padding: 0 7px 0 10px; display: flex; align-items: center; background: #f4f4f4; border-top: 1px solid #d6d6d6; }
.ready { margin-right: 15px; }
.a11y { margin-left: 14px; gap: 3px; font-weight: 500; }
.spacer { flex: 1; }
.view { width: 36px; height: 19px; }
.view.on { background: #dedede; border: 0; border-radius: 0; }
.zb { width: 14px; font-size: 14px; }
.status input { appearance: none; width: 90px; height: 12px; background: linear-gradient(#888, #888) center / 100% 1px no-repeat; }
.status input::-webkit-slider-thumb { appearance: none; width: 5px; height: 10px; background: #555; }
.percent { margin-left: 8px; font-size: 12px; }
```
